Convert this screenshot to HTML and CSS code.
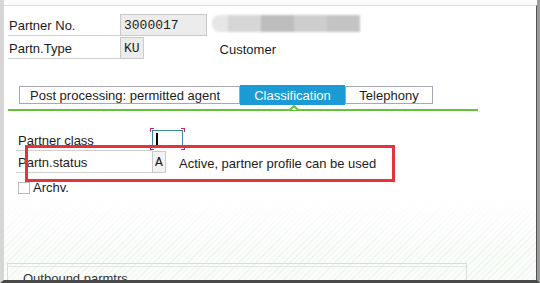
FILE: index.html
```html
<!DOCTYPE html>
<html lang="en">
<head>
  <meta charset="UTF-8" />
  <title>Partner profile - Classification</title>
  <link rel="stylesheet" href="styles.css">
</head>
<body>
  <div class="window">
    <div class="pane">

      <div class="header">
        <div class="row">
          <span class="lbl">Partner No.</span>
          <span class="inp num">3000017</span>
          <span class="blurred"><i></i><i></i><i></i><i></i><i></i></span>
        </div>
        <div class="row">
          <span class="lbl">Partn.Type</span>
          <span class="inp">KU</span>
          <span class="desc desc-type">Customer</span>
        </div>
      </div>

      <div class="tabstrip">
        <span class="tab">Post processing: permitted agent</span>
        <span class="tab tab-active">Classification</span>
        <span class="tab tab-last">Telephony</span>
      </div>
      <div class="tabline">
        <svg class="caret" width="10" height="6" viewBox="0 0 10 6">
          <polyline points="1,6 5,2 9,6" fill="#ffffff" stroke="#68c13c" stroke-width="2" />
        </svg>
      </div>

      <div class="tabbody">
        <div class="row row-sub">
          <span class="lbl lbl-sub">Partner class</span>
          <span class="inp inp-focus"><b class="cursor"></b></span>
        </div>
        <div class="row row-sub">
          <span class="lbl lbl-sub">Partn.status</span>
          <span class="inp inp-small">A</span>
          <span class="desc desc-status">Active, partner profile can be used</span>
        </div>
        <label class="check"><span class="box"></span>Archv.</label>
        <!-- annotation drawn on top of the screenshot -->
        <div class="highlight"></div>
      </div>

      <div class="group">
        <span class="group-title">Outbound parmtrs</span>
      </div>

    </div>
  </div>
</body>
</html>
```

FILE: styles.css
```css
html, body {
  margin: 0;
  padding: 0;
  background: #ffffff;
}

.window {
  width: 540px;
  height: 283px;
  box-sizing: border-box;
  overflow: hidden;
  padding-top: 5px;
  border-left: 4px solid #d6d6d6;
  border-right: 3px solid #9a9a9a;
  border-bottom: 3px solid #4a4a4a;
  background: #fbfbfb;
  font-family: "Liberation Sans", Arial, sans-serif;
  font-size: 13px;
  color: #1c1c1c;
}

.pane {
  height: 100%;
  box-sizing: border-box;
  border-top: 1px solid #dadada;
  border-right: 1px solid #555;
  padding-left: 4px;
  display: flex;
  flex-direction: column;
  background:
    linear-gradient(to bottom, #ffffff 0, #ffffff 190px, rgba(255, 255, 255, 0) 250px),
    repeating-linear-gradient(135deg, #fbfdfb 0, #fbfdfb 3px, #eef4ee 3px, #eef4ee 4px);
}

.pane > * {
  flex-shrink: 0;
}

/* header fields */
.header {
  padding-top: 8px;
}

.row {
  display: flex;
  height: 22px;
  align-items: stretch;
}

.header .row + .row {
  margin-top: 1px;
}

.lbl {
  width: 112px;
  box-sizing: border-box;
  padding-left: 1px;
  padding-top: 2px;
  border-bottom: 1px solid #cfcfcf;
  display: flex;
  align-items: center;
}

.inp {
  box-sizing: border-box;
  border: 1px solid #cacaca;
  background: #ececec;
  font-family: "Liberation Mono", "DejaVu Sans Mono", monospace;
  padding: 0 3px;
  display: flex;
  align-items: center;
}

.inp.num {
  width: 87px;
}

.blurred {
  margin: 1px 0 4px 5px;
  width: 148px;
  display: flex;
  border-radius: 8px 0 0 8px;
  overflow: hidden;
  filter: blur(1.2px);
  background: #e4e4e4;
}

.blurred i {
  flex: 1;
  background: #c4c4c4;
}

.blurred i:nth-child(2) { background: #d6d6d6; }
.blurred i:nth-child(3) { background: #bdbdbd; }
.blurred i:nth-child(4) { background: #cdcdcd; }
.blurred i:nth-child(1) { background: #e6e6e6; flex: 0.5; }

.desc {
  display: flex;
  align-items: center;
  padding-top: 2px;
}

.desc-type {
  margin-left: 76px;
}

/* tabs */
.tabstrip {
  margin-top: 26px;
  margin-left: 11px;
  display: flex;
  align-items: center;
  height: 20px;
}

.tab {
  height: 18px;
  box-sizing: border-box;
  border: 1px solid #a8a6b4;
  display: flex;
  align-items: center;
  padding: 0 10px;
  background: #ffffff;
}

.tab:first-child {
  width: 221px;
}

.tab-active {
  height: 20px;
  width: 105px;
  border-color: #1b9ad6;
  background: #1b9ad6;
  color: #ffffff;
  justify-content: center;
  padding: 0;
}

.tab-last {
  width: 88px;
  justify-content: center;
  padding: 0;
}

.tabline {
  position: relative;
  margin-top: 4px;
  width: 470px;
  height: 2px;
  background: #68c13c;
}

.caret {
  position: absolute;
  left: 281px;
  top: -5px;
  display: block;
}

/* tab content */
.tabbody {
  position: relative;
  padding-top: 18px;
}

.row-sub {
  height: 22px;
}

.lbl-sub {
  margin-left: 8px;
  width: 136px;
  padding-left: 2px;
  padding-top: 1px;
}

.inp-focus {
  position: relative;
  width: 31px;
  height: 18px;
  margin-top: 1px;
  background: #ffffff;
  border-color: #3b8aa0;
}

.inp-focus::before {
  content: "";
  position: absolute;
  left: -3px;
  right: -3px;
  top: -3px;
  bottom: -3px;
  border: 1px solid #c8286e;
  -webkit-mask:
    linear-gradient(#000, #000) left top / 4px 4px no-repeat,
    linear-gradient(#000, #000) right top / 4px 4px no-repeat,
    linear-gradient(#000, #000) left bottom / 4px 4px no-repeat,
    linear-gradient(#000, #000) right bottom / 4px 4px no-repeat;
}

.cursor {
  display: block;
  width: 2px;
  height: 13px;
  background: #000;
}

.inp-small {
  width: 14px;
  padding: 0 2px;
  background: #f2f2f2;
}

.desc-status {
  margin-left: 13px;
}

.check {
  margin-top: 8px;
  margin-left: 10px;
  display: flex;
  align-items: center;
  height: 13px;
}

.box {
  width: 10px;
  height: 10px;
  border: 1px solid #b9b9b9;
  background: #ffffff;
  margin-right: 3px;
}

.highlight {
  position: absolute;
  left: 17px;
  top: 34px;
  width: 364px;
  height: 31px;
  border: 3px solid #e2353b;
}

/* bottom group box */
.group {
  margin-top: 69px;
  margin-left: -1px;
  width: 458px;
  border-top: 1px solid #d9dcd9;
  border-left: 1px solid #d9dcd9;
  border-right: 1px solid #d9dcd9;
  padding-top: 2px;
}

.group-title {
  display: block;
  border-top: 1px solid #e3e6e3;
  padding: 4px 0 0 15px;
  color: #333;
}
```
